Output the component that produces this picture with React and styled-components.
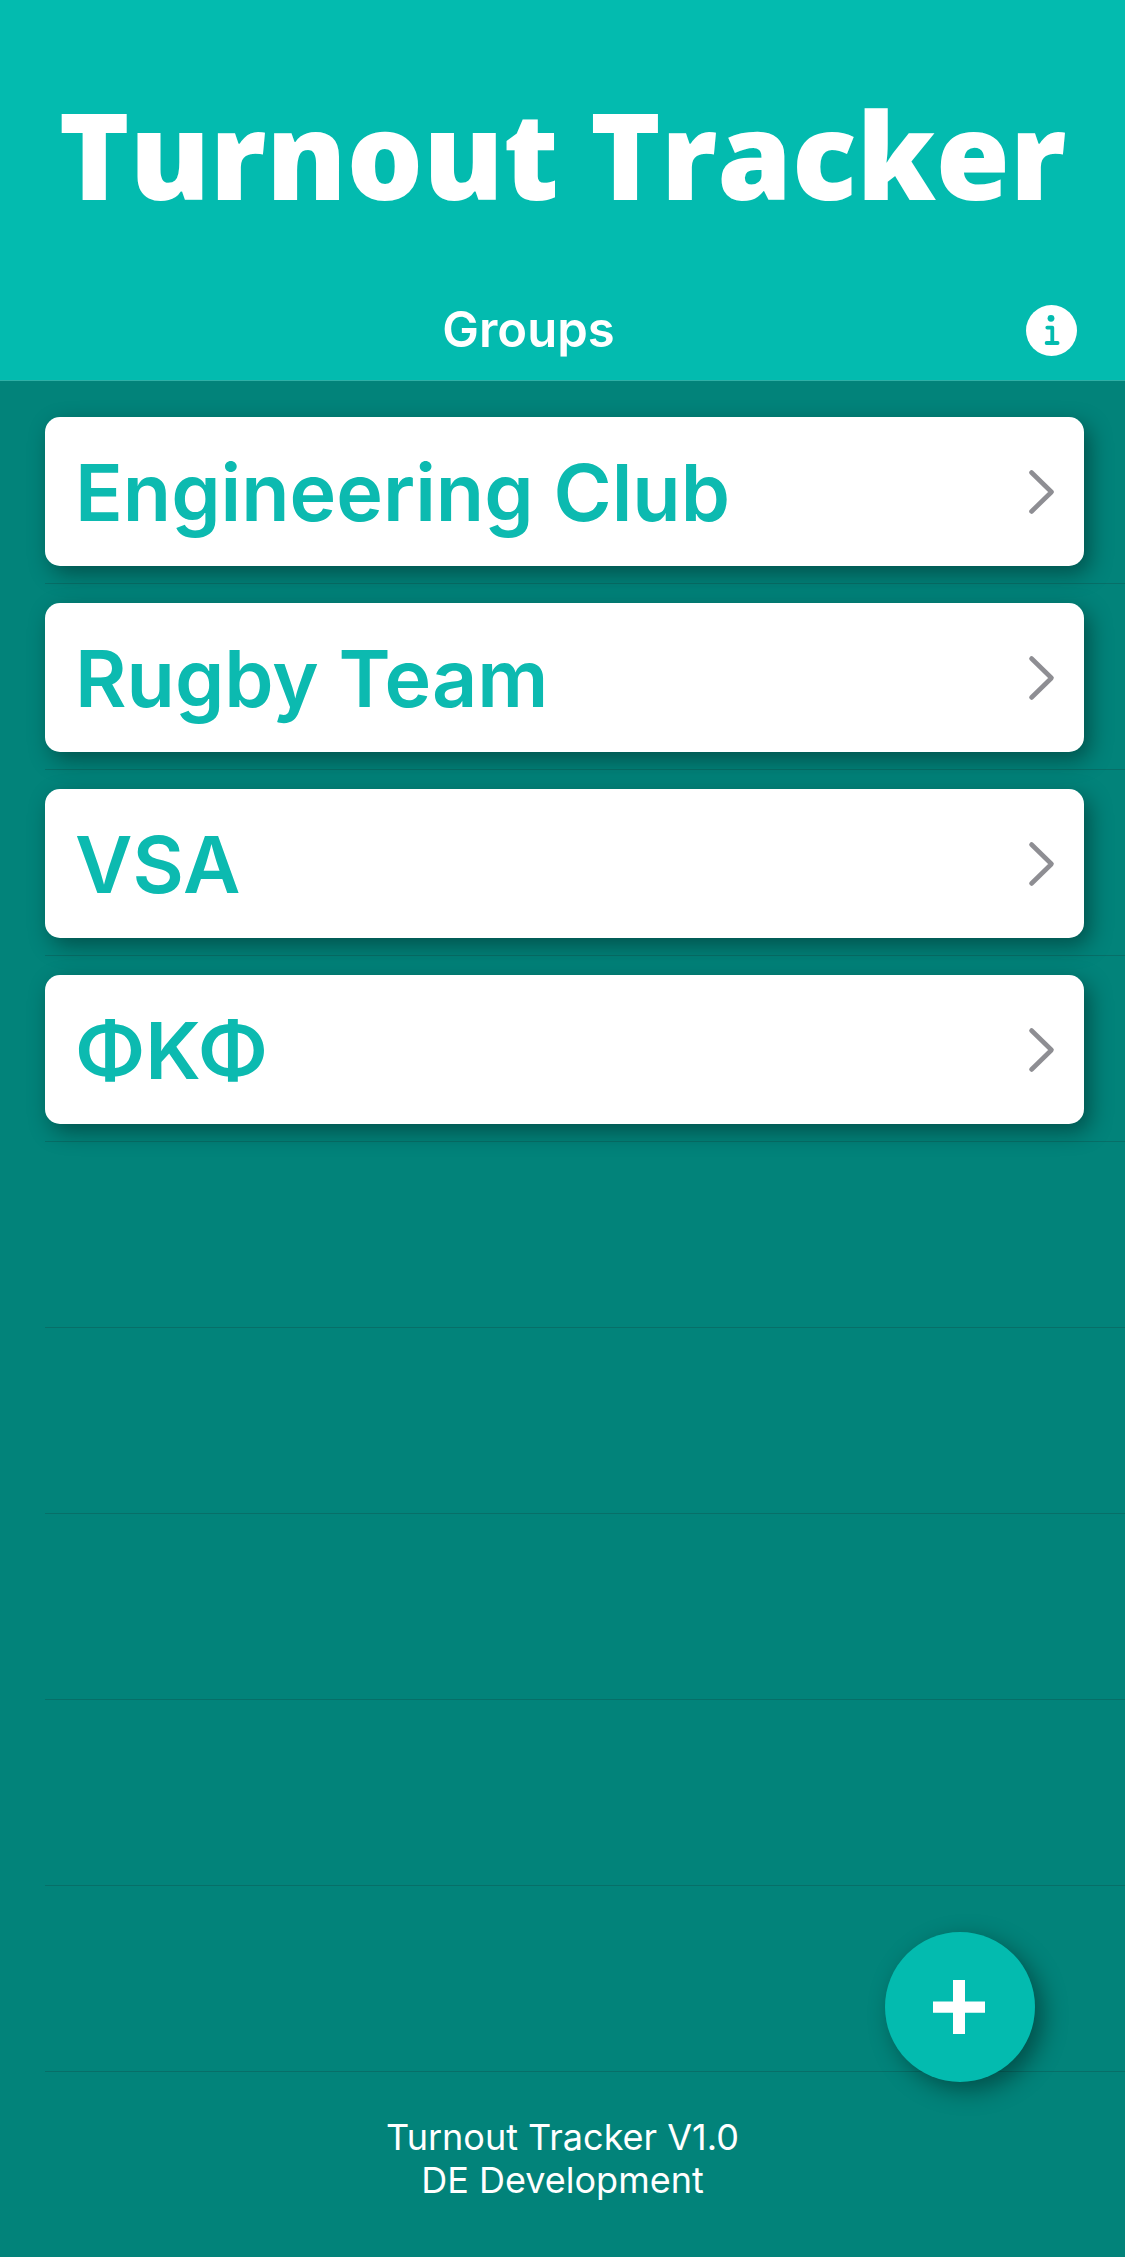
import React from "react";
import styled, { createGlobalStyle } from "styled-components";

const colors = {
  header: "#03bbaf",
  edge: "#2fb0a6",
  page: "#02837a",
  rule: "#076f68",
  group: "#0cbab0",
  chevron: "#8e8e93",
};

const GlobalStyle = createGlobalStyle`
  *, *::before, *::after { box-sizing: border-box; }
  body {
    margin: 0;
    background: ${colors.page};
    font-family: Inter, "Liberation Sans", sans-serif;
  }
`;

const Page = styled.div`
  position: relative;
  min-height: 100vh;
  display: flex;
  flex-direction: column;
  background: ${colors.page};
`;

const Header = styled.header`
  display: flex;
  flex-direction: column;
  background: ${colors.header};
  border-bottom: 1px solid ${colors.edge};
`;

const Brand = styled.h1`
  margin: 0;
  padding: 74px 0 46px;
  color: #fff;
  font-family: "Open Sans", "Liberation Sans", sans-serif;
  font-size: 120px;
  font-weight: 800;
  line-height: 160px;
  text-align: center;
  white-space: nowrap;
`;

const NavBar = styled.div`
  display: flex;
  align-items: center;
  height: 100px;
  padding: 0 48px 0 31px;
`;

const NavTitle = styled.h2`
  flex: 1;
  margin: 0;
  color: #fff;
  font-size: 49px;
  font-weight: 600;
  line-height: 60px;
  text-align: center;
`;

const InfoButton = styled.button`
  display: flex;
  padding: 0;
  border: 0;
  background: none;
  cursor: pointer;
`;

const List = styled.ul`
  margin: 0;
  padding: 17px 0 0 45px;
  list-style: none;
`;

const Row = styled.li`
  height: 186px;
  padding: 19px 41px 17px 0;
  border-bottom: 1px solid ${colors.rule};
`;

const Card = styled.a`
  display: flex;
  align-items: center;
  justify-content: space-between;
  height: 100%;
  padding: 0 28px 0 30px;
  border-radius: 15px;
  background: #fff;
  box-shadow: 6px 8px 22px rgba(0, 0, 0, 0.38);
  color: ${colors.group};
  font-size: 79px;
  font-weight: 600;
  line-height: 100px;
  text-decoration: none;
`;

const AddButton = styled.button`
  position: absolute;
  right: 90px;
  bottom: 175px;
  display: flex;
  align-items: center;
  justify-content: center;
  width: 150px;
  height: 150px;
  padding: 0;
  border: 0;
  border-radius: 50%;
  background: ${colors.header};
  box-shadow: 8px 8px 24px rgba(0, 0, 0, 0.4);
  cursor: pointer;
`;

const Footer = styled.footer`
  padding: 44px 0;
  color: #fff;
  font-size: 36px;
  line-height: 43px;
  text-align: center;
`;

const FooterLine = styled.p`
  margin: 0;
`;

const InfoIcon = () => (
  <svg width="51" height="51" viewBox="0 0 51 51" aria-hidden="true">
    <circle cx="25.5" cy="25.5" r="25.5" fill="#fff" />
    <circle cx="25" cy="13.3" r="3.4" fill={colors.header} />
    <path
      d="M21.3 22.6H26.3V38M20.6 38H31.6"
      fill="none"
      stroke={colors.header}
      strokeWidth="3.8"
      strokeLinecap="round"
      strokeLinejoin="round"
    />
  </svg>
);

const Chevron = () => (
  <svg width="28" height="46" viewBox="0 0 28 46" aria-hidden="true">
    <path
      d="M3.5 3.5L23.5 23L3.5 42.5"
      fill="none"
      stroke={colors.chevron}
      strokeWidth="4.6"
      strokeLinecap="round"
      strokeLinejoin="round"
    />
  </svg>
);

const PlusIcon = () => (
  <svg width="54" height="54" viewBox="0 0 54 54" aria-hidden="true">
    <path d="M20 0H32V21.6H52V32.8H32V54H20V32.8H0V21.6H20Z" fill="#fff" />
  </svg>
);

const groups = ["Engineering Club", "Rugby Team", "VSA", "ΦΚΦ"];
const emptyRows = ["e1", "e2", "e3", "e4", "e5"];

export default function App() {
  return (
    <Page>
      <GlobalStyle />
      <Header>
        <Brand>Turnout Tracker</Brand>
        <NavBar>
          <NavTitle>Groups</NavTitle>
          <InfoButton type="button" aria-label="Info">
            <InfoIcon />
          </InfoButton>
        </NavBar>
      </Header>
      <main>
        <List>
          {groups.map((name) => (
            <Row key={name}>
              <Card href="#">
                {name}
                <Chevron />
              </Card>
            </Row>
          ))}
          {emptyRows.map((id) => (
            <Row key={id} aria-hidden="true" />
          ))}
        </List>
      </main>
      <Footer>
        <FooterLine>Turnout Tracker V1.0</FooterLine>
        <FooterLine>DE Development</FooterLine>
      </Footer>
      <AddButton type="button" aria-label="Add group">
        <PlusIcon />
      </AddButton>
    </Page>
  );
}
